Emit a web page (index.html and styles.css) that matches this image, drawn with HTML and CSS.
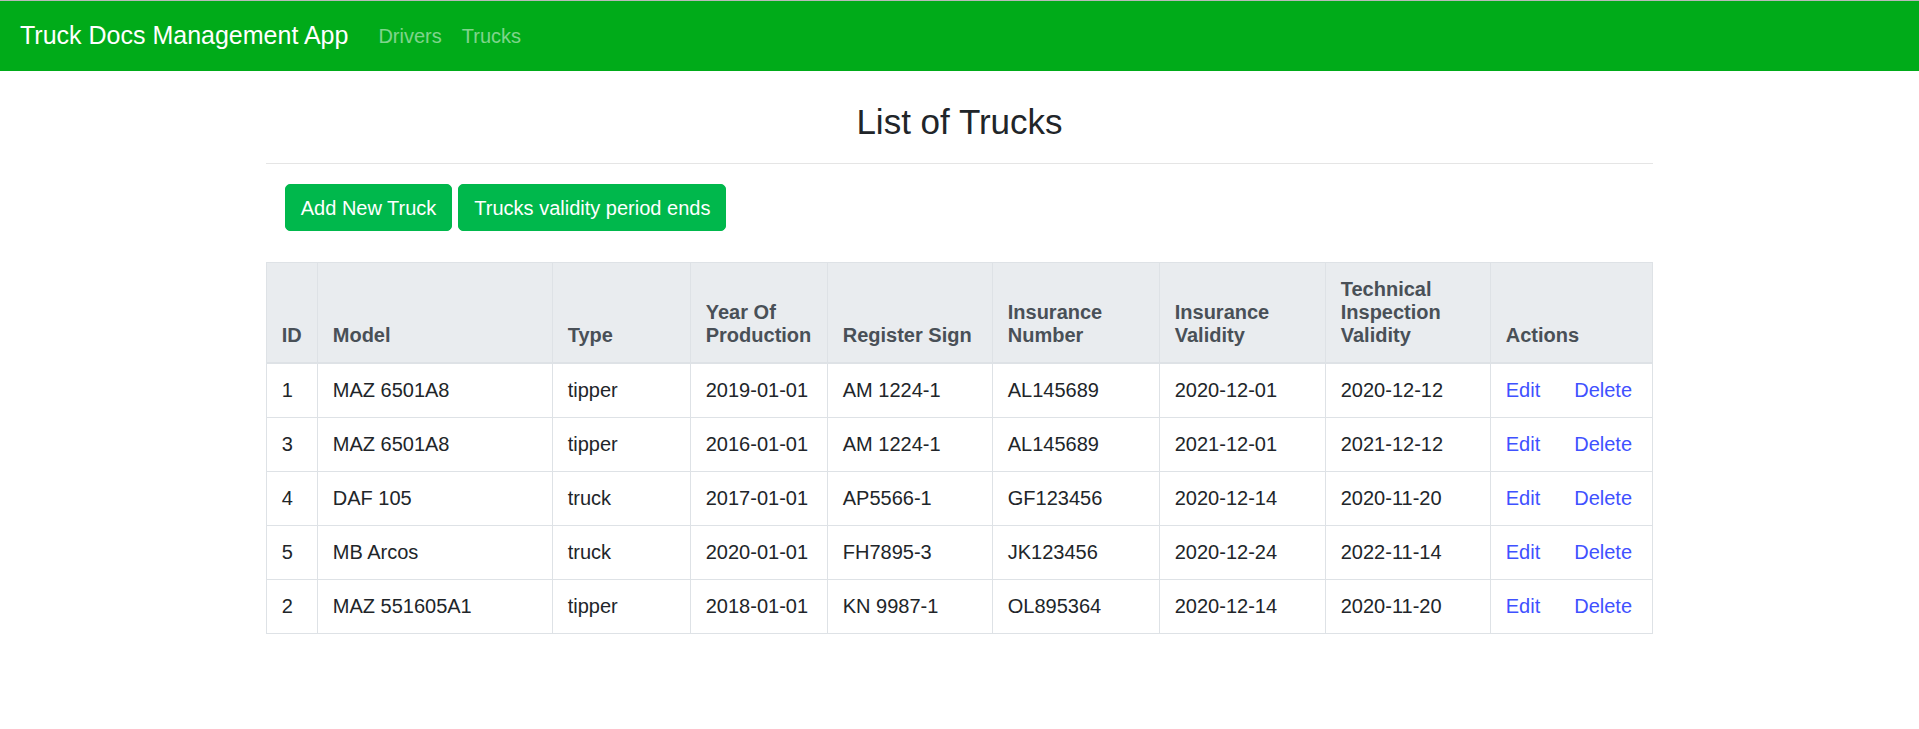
FILE: index.html
```html
<!DOCTYPE html>
<html lang="en">
<head>
<meta charset="utf-8">
<title>Truck Docs Management App</title>
<link rel="stylesheet" href="styles.css">
</head>
<body>
<div class="topline"></div>
<nav class="navbar">
  <a class="brand" href="#">Truck Docs Management App</a>
  <ul class="nav">
    <li><a class="nav-link" href="#">Drivers</a></li>
    <li><a class="nav-link" href="#">Trucks</a></li>
  </ul>
</nav>
<main class="container">
  <h3 class="title">List of Trucks</h3>
  <hr class="rule">
  <div class="actions-bar">
    <a class="btn" href="#">Add New Truck</a>
    <a class="btn" href="#">Trucks validity period ends</a>
  </div>
  <table class="table">
    <colgroup>
      <col class="c-id"><col class="c-model"><col class="c-type"><col class="c-year"><col class="c-reg"><col class="c-ins"><col class="c-insv"><col class="c-tech"><col class="c-act">
    </colgroup>
    <thead>
      <tr>
        <th>ID</th><th>Model</th><th>Type</th><th>Year Of Production</th><th>Register Sign</th><th>Insurance Number</th><th>Insurance Validity</th><th>Technical Inspection Validity</th><th>Actions</th>
      </tr>
    </thead>
    <tbody>
      <tr><td>1</td><td>MAZ 6501A8</td><td>tipper</td><td>2019-01-01</td><td>AM 1224-1</td><td>AL145689</td><td>2020-12-01</td><td>2020-12-12</td><td><a class="link" href="#">Edit</a><a class="link del" href="#">Delete</a></td></tr>
      <tr><td>3</td><td>MAZ 6501A8</td><td>tipper</td><td>2016-01-01</td><td>AM 1224-1</td><td>AL145689</td><td>2021-12-01</td><td>2021-12-12</td><td><a class="link" href="#">Edit</a><a class="link del" href="#">Delete</a></td></tr>
      <tr><td>4</td><td>DAF 105</td><td>truck</td><td>2017-01-01</td><td>AP5566-1</td><td>GF123456</td><td>2020-12-14</td><td>2020-11-20</td><td><a class="link" href="#">Edit</a><a class="link del" href="#">Delete</a></td></tr>
      <tr><td>5</td><td>MB Arcos</td><td>truck</td><td>2020-01-01</td><td>FH7895-3</td><td>JK123456</td><td>2020-12-24</td><td>2022-11-14</td><td><a class="link" href="#">Edit</a><a class="link del" href="#">Delete</a></td></tr>
      <tr><td>2</td><td>MAZ 551605A1</td><td>tipper</td><td>2018-01-01</td><td>KN 9987-1</td><td>OL895364</td><td>2020-12-14</td><td>2020-11-20</td><td><a class="link" href="#">Edit</a><a class="link del" href="#">Delete</a></td></tr>
    </tbody>
  </table>
</main>
</body>
</html>
```
FILE: styles.css
```css
* { box-sizing: border-box; }
html, body { margin: 0; padding: 0; }
body {
  font-family: "Liberation Sans", Arial, sans-serif;
  font-size: 20px;
  line-height: 1.5;
  color: #212529;
  background: #fff;
}
a { text-decoration: none; }

.topline { height: 1px; background: #b9b9b9; }

.navbar {
  display: flex;
  align-items: center;
  height: 70px;
  padding: 10px 20px;
  background: #00ab19;
}
.brand {
  font-size: 25px;
  line-height: 37.5px;
  padding: 6.25px 0;
  margin-right: 20px;
  color: #fff;
}
.nav {
  display: flex;
  list-style: none;
  margin: 0;
  padding: 0;
}
.nav-link {
  display: block;
  padding: 10px 10px;
  color: rgba(255, 255, 255, 0.5);
}

.container {
  max-width: 1425px;
  margin: 0 auto;
  padding: 0 18.75px;
}
.title {
  margin: 30px 0 0;
  font-size: 35px;
  font-weight: 400;
  line-height: 42px;
  text-align: center;
}
.rule {
  margin: 20px 0;
  border: 0;
  border-top: 1px solid rgba(0, 0, 0, 0.1);
  height: 0;
}
.actions-bar {
  margin: 0 0 31px 19px;
  display: flex;
  gap: 6px;
}
.btn {
  display: inline-block;
  padding: 7.5px 15px;
  border: 1px solid #00b84c;
  border-radius: 5px;
  background: #00b84c;
  color: #fff;
  font-size: 20px;
  line-height: 30px;
}

.table {
  width: 100%;
  table-layout: fixed;
  border-collapse: collapse;
  line-height: 23px;
}
.c-id { width: 51px; }
.c-model { width: 235px; }
.c-type { width: 138px; }
.c-year { width: 137px; }
.c-reg { width: 165px; }
.c-ins { width: 167px; }
.c-insv { width: 166px; }
.c-tech { width: 165px; }
.table th, .table td {
  border: 1px solid #dee2e6;
  padding: 15px;
  text-align: left;
  vertical-align: top;
}
.table thead th {
  background: #e9ecef;
  color: #495057;
  font-weight: 700;
  vertical-align: bottom;
  border-bottom: 2px solid #dee2e6;
}
.link { color: #3f51ff; }
.del { margin-left: 34px; }
```
